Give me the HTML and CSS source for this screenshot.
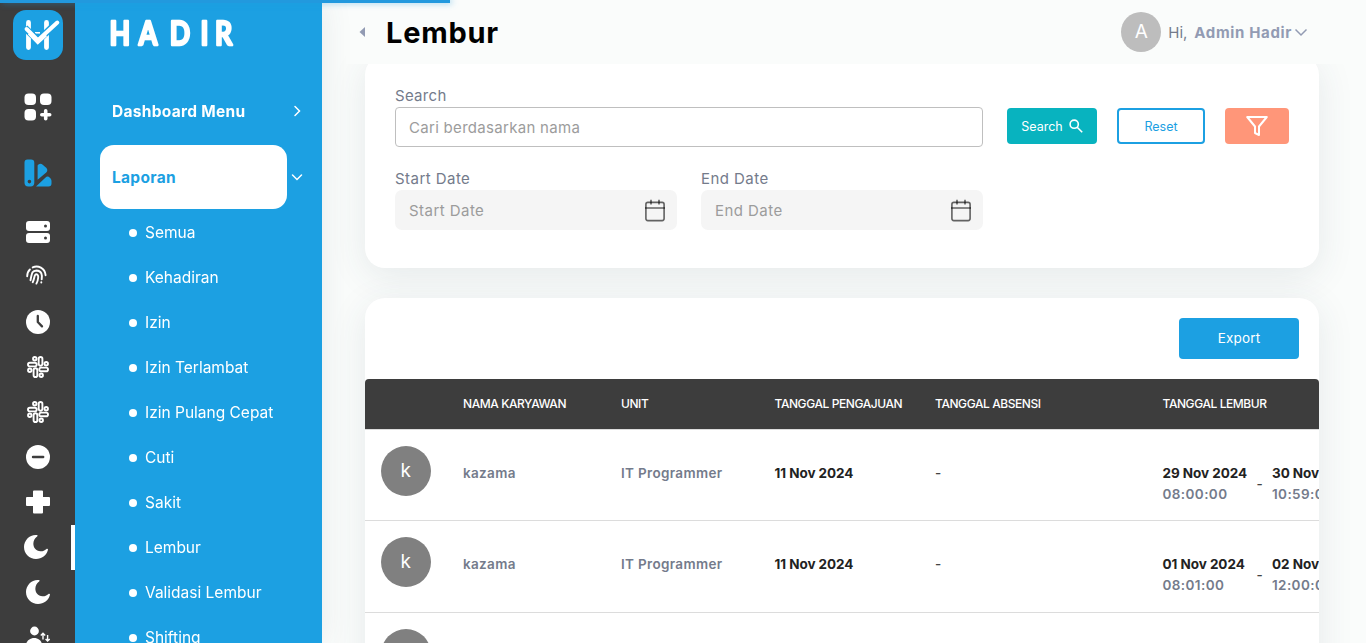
FILE: index.html
```html
<!DOCTYPE html>
<html lang="id">
<head>
<meta charset="utf-8">
<title>Lembur - Hadir</title>
<link rel="stylesheet" href="styles.css">
</head>
<body>
<div class="progress"></div>
<div class="app">
  <nav class="rail">
    <svg class="brand" width="50" height="50" viewBox="13 10 50 50">
      <rect x="13" y="10" width="50" height="50" rx="13" fill="#1ca0e2"/>
      <g stroke="#fff" stroke-width="4.800" stroke-linecap="round">
        <path d="M28.500 22.500V47.500M46.500 22.500V47.500"/>
        <path d="M35 32.800H40" stroke-width="1.600" stroke-linecap="butt"/>
      </g>
      <path d="M25 28L38 40.500L57 22.500" fill="none" stroke="#1ca0e2" stroke-width="6.800"/>
      <path d="M29.500 33L37.800 41.500L45.500 34.500" fill="none" stroke="#fff" stroke-width="4.500"/>
      <path d="M26.600 29L38 40.300L57.300 22.500" fill="none" stroke="#fff" stroke-width="4" stroke-linecap="round" stroke-linejoin="round"/>
    </svg>
    <a class="rail-main rail-first">
      <svg width="28" height="28" viewBox="0 0 28 28" fill="#fff">
        <rect x=".5" y=".5" width="11.5" height="11.5" rx="4"/><rect x="16" y=".5" width="11.5" height="11.5" rx="4"/><rect x=".5" y="16" width="11.5" height="11.5" rx="4"/>
        <path d="M21.7 17.8V25.7M17.8 21.7H25.7" stroke="#fff" stroke-width="3.6" stroke-linecap="round"/>
      </svg>
    </a>
    <a class="rail-main">
      <svg width="28" height="28" viewBox="0 0 28 28" fill="#1ca0e2">
        <path fill-rule="evenodd" d="M3.5 .5h3.5a3.3 3.3 0 0 1 3.3 3.3v20a3.7 3.7 0 0 1-3.7 3.7H4.2a3.7 3.7 0 0 1-3.7-3.7V3.5a3 3 0 0 1 3-3zM5.4 20.8a1.8 1.8 0 1 0 0 3.6a1.8 1.8 0 0 0 0-3.6z"/>
        <path d="M13.6 20.8V7.1C13.6 5.2 16.6 4 18.4 5.5L22.2 8.8C23.8 10.3 23.6 12.3 22.2 13.6z"/>
        <path d="M12 27.5L21.3 18.7C22.6 17.4 24.4 17.1 25.6 18.5C26.8 19.8 27.5 20.4 27.5 22V24.5C27.5 26.5 26.5 27.5 24.5 27.5z"/>
      </svg>
    </a>
    <div class="rail-list">
      <a><svg width="24" height="24" viewBox="0 0 24 24"><g fill="#fff"><rect y="1" width="24" height="10" rx="3"/><rect y="13" width="24" height="10" rx="3"/></g><g fill="#3d3d3d"><circle cx="19.5" cy="6" r="1.5"/><circle cx="19.5" cy="18" r="1.5"/></g></svg></a>
      <a><svg width="24" height="24" viewBox="0 0 24 24" fill="none" stroke="#fff" stroke-width="1.9" stroke-linecap="round"><path d="M1.2 12.2C1.2 9.8 2.2 7.1 3.9 5.5M6.7 3.4C12 .8 18.9 4.1 19.6 11.2"/><path d="M4.5 16.2C6 8.8 6.1 6.7 10.5 6.5C15.9 6.7 16.3 11.2 15.7 15.4M15.3 18.3V18.5"/><path d="M6.7 18.2C8.8 14.4 8 10.3 10.3 10.3C13.5 10.3 12.1 16.5 10.4 19.6"/></svg></a>
      <a><svg width="24" height="24" viewBox="0 0 24 24"><circle cx="12" cy="12" r="12" fill="#fff"/><path d="M11.8 6V12L16 16.4" fill="none" stroke="#3d3d3d" stroke-width="2.3" stroke-linecap="round" stroke-linejoin="round"/></svg></a>
      <a><svg width="24" height="24" viewBox="0 0 24 24" fill="none" stroke="#fff" stroke-width="1.9"><g id="knot"><rect x="12.7" y="2" width="3.7" height="8.7" rx="1.85"/><circle cx="8.8" cy="3.8" r="1.75"/><rect x="2" y="7.7" width="8.7" height="3.7" rx="1.85"/><circle cx="3.8" cy="15.2" r="1.75"/><rect x="7.6" y="13.3" width="3.7" height="8.7" rx="1.85"/><circle cx="15.2" cy="20.2" r="1.75"/><rect x="13.3" y="12.6" width="8.7" height="3.7" rx="1.85"/><circle cx="20.2" cy="8.8" r="1.75"/></g></svg></a>
      <a><svg width="24" height="24" viewBox="0 0 24 24" fill="none" stroke="#fff" stroke-width="1.9"><use href="#knot"/></svg></a>
      <a><svg width="24" height="24" viewBox="0 0 24 24"><circle cx="12" cy="12" r="12" fill="#fff"/><path d="M7 12H17.2" stroke="#3d3d3d" stroke-width="2.4" stroke-linecap="round"/></svg></a>
      <a><svg width="24" height="24" viewBox="0 0 24 24" fill="#fff"><path d="M8 .5H16a1 1 0 0 1 1 1V7h6a1 1 0 0 1 1 1v7a1 1 0 0 1-1 1H17v6.500a1 1 0 0 1-1 1H8a1 1 0 0 1-1-1V16H1a1 1 0 0 1-1-1V8a1 1 0 0 1 1-1H7V1.500a1 1 0 0 1 1-1z"/></svg></a>
      <a class="active"><svg width="24" height="24" viewBox="0 0 24 24" fill="#fff"><path id="moon" d="M12.600 .1C13.800 .2 14 1 13.100 1.500C7 6 8.500 15.500 16.500 16.200C18.500 16.400 20.500 15.600 22.200 14.200C23.200 13.400 24.300 13.800 23.900 15C22.500 20.500 17.800 24 12 24C5.400 24 0 18.600 0 12S5.800-.5 12.600 .1z"/></svg></a>
      <a><svg width="24" height="24" viewBox="0 0 24 24" fill="#fff"><use href="#moon"/></svg></a>
      <a><svg width="24" height="24" viewBox="0 0 24 24" fill="#fff"><circle cx="8.500" cy="6" r="4.400"/><path d="M0 21V19.500C1.500 10.800 15 10.800 16 19.500V21z"/><g fill="none" stroke="#fff" stroke-width="1.400"><path d="M17 14.500V8.500M14.800 10.600L17 8.300L19.200 10.600M21.600 10V16M19.600 14L21.600 16.100L23.700 14"/></g></svg></a>
    </div>
  </nav>

  <aside class="side">
    <svg class="wordmark" width="130" height="34" viewBox="0 0 130 34"><text transform="scale(.84 1)" x="1.800 36.500 73.500 110 127.500" y="28.500">HADIR</text></svg>
    <a class="group"><span>Dashboard Menu</span><svg width="8" height="12" viewBox="0 0 8 12"><path d="M2 1.500L6.500 6L2 10.500"/></svg></a>
    <a class="group open"><span>Laporan</span><svg width="12" height="8" viewBox="0 0 12 8"><path d="M1.500 2L6 6.500L10.500 2"/></svg></a>
    <ul>
      <li>Semua</li><li>Kehadiran</li><li>Izin</li><li>Izin Terlambat</li><li>Izin Pulang Cepat</li><li>Cuti</li><li>Sakit</li><li>Lembur</li><li>Validasi Lembur</li><li>Shifting</li>
    </ul>
  </aside>

  <main>
    <header>
      <svg width="6" height="10" viewBox="0 0 6 10"><path d="M6 0V10L.5 5z" fill="#929bb3"/></svg>
      <h1>Lembur</h1>
      <div class="user">
        <span class="initial">A</span><span class="hi">Hi,</span><b>Admin Hadir</b>
        <svg width="14" height="9" viewBox="0 0 14 9"><path d="M1.500 1.500L7 7L12.500 1.500" fill="none" stroke="#929bb3" stroke-width="1.500"/></svg>
      </div>
    </header>

    <section class="card filter">
      <div class="fields">
        <label class="wide"><span>Search</span><span class="input outlined">Cari berdasarkan nama</span></label>
        <label><span>Start Date</span><span class="input">Start Date
          <svg width="24" height="24" viewBox="0 0 24 24" fill="none" stroke="#000" stroke-opacity=".6" stroke-width="1.600"><g id="cal"><rect x="2.900" y="3.400" width="18.200" height="18.200" rx="2"/><path d="M2 9H22M8 .8V5.500M16 .8V5.500"/></g></svg></span></label>
        <label><span>End Date</span><span class="input">End Date
          <svg width="24" height="24" viewBox="0 0 24 24" fill="none" stroke="#000" stroke-opacity=".6" stroke-width="1.600"><use href="#cal"/></svg></span></label>
      </div>
      <div class="actions">
        <button class="search">Search <svg width="14" height="14" viewBox="0 0 14 14" fill="none" stroke="#fff" stroke-width="1.600"><circle cx="5.200" cy="5.200" r="4.100"/><path d="M8.200 8.200L13.200 13.200"/></svg></button>
        <button class="reset">Reset</button>
        <button class="funnel"><svg width="24" height="22" viewBox="0 0 24 22" fill="none" stroke="#fff" stroke-width="2"><path d="M2.200 2H21.800L14 11.500V20L10 18V11.500z" stroke-linejoin="round"/></svg></button>
      </div>
    </section>

    <section class="card list">
      <div class="tools"><button class="export">Export</button></div>
      <div class="table">
        <div class="row head"><i></i><span>NAMA KARYAWAN</span><span>UNIT</span><span>TANGGAL PENGAJUAN</span><span>TANGGAL ABSENSI</span><span>TANGGAL LEMBUR</span></div>
        <div class="row"><i class="avatar">k</i><span>kazama</span><span>IT Programmer</span><span class="dark">11 Nov 2024</span><span class="dash">-</span>
          <div class="range"><p><b>29 Nov 2024</b>08:00:00</p><em>-</em><p><b>30 Nov 2024</b>10:59:00</p></div></div>
        <div class="row tall"><i class="avatar">k</i><span>kazama</span><span>IT Programmer</span><span class="dark">11 Nov 2024</span><span class="dash">-</span>
          <div class="range"><p><b>01 Nov 2024</b>08:01:00</p><em>-</em><p><b>02 Nov 2024</b>12:00:00</p></div></div>
        <div class="row"><i class="avatar">k</i></div>
      </div>
    </section>
  </main>
</div>
</body>
</html>
```
FILE: styles.css
```css
* { box-sizing: border-box; }
body { margin: 0; height: 643px; overflow: hidden; background: #fafcfb; font-family: Inter, sans-serif; font-size: 15px; color: #747b8b; }
.app { display: flex; height: 643px; overflow: hidden; }
.progress { position: fixed; z-index: 9; top: 0; left: 0; width: 450px; height: 3px; background: #2299de; box-shadow: 2px 0 6px rgba(34, 153, 222, .6); }
.rail { flex: 0 0 75px; background: #3d3d3d; padding-top: 10px; z-index: 3; }
.brand { display: block; margin-left: 13px; }
.rail-main { display: flex; justify-content: center; align-items: center; height: 66px; }
.rail-main.rail-first { margin-top: 14px; }
.rail-main + .rail-main { margin-bottom: 4px; }
.rail-list a { display: flex; align-items: center; justify-content: center; height: 45px; padding: 0 0 2px 1px; }
.rail-list .active { border-right: 4px solid #fff; }
.rail-list a:nth-child(2) svg { margin-top: -2px; }
.side { flex: 0 0 247px; background: #1ca0e2; color: #fff; z-index: 2; padding-top: 16px; box-shadow: 0 0 30px rgba(60, 80, 90, .1); }
.wordmark { display: block; margin: 0 0 28px 33px; overflow: visible; }
.wordmark text { font: 700 32px Lato, sans-serif; fill: #fff; stroke: #fff; stroke-width: 2.400px; stroke-linejoin: round; }
.group { display: flex; align-items: center; height: 66px; padding-left: 25px; }
.group span { flex: 0 0 187px; padding-left: 12px; font-weight: 700; font-size: 15.500px; letter-spacing: .3px; }
.group svg { margin-left: 6px; fill: none; stroke: #fff; stroke-width: 1.500; stroke-linecap: round; }
.group.open span { height: 64px; line-height: 65px; background: #fff; color: #1ca0e2; border-radius: 14px; }
.group.open svg { margin-left: 4px; }
.side ul { list-style: none; margin: 0; padding: 0 0 0 54px; }
.side li { display: flex; align-items: center; height: 45px; font-size: 15.500px; }
.side li::before { content: ""; width: 8px; height: 8px; border-radius: 50%; background: #fff; margin-right: 8px; }
main { flex: 1; min-width: 0; padding: 55px 47px 0 43px; }
header { position: fixed; z-index: 1; top: 0; left: 346px; right: 0; height: 64px; padding: 0 58px 0 13px; background: #fafcfb; display: flex; align-items: center; }
h1 { margin: 1px 0 0 21px; color: #000; font-size: 29px; font-weight: 700; line-height: 36px; letter-spacing: .75px; }
.user { margin-left: auto; display: flex; align-items: center; color: #747b8b; }
.initial { width: 40px; height: 40px; border-radius: 50%; background: #bdbdbd; color: #fff; font-size: 19px; line-height: 40px; text-align: center; margin-right: 7px; }
.user b { margin: 0 2px 0 7px; color: #929bb3; letter-spacing: .65px; }
.card { width: 954px; background: #fff; border-radius: 20px; box-shadow: 0 8px 36px rgba(50, 65, 85, .1); }
.filter { height: 213px; padding: 31px 30px 0; display: flex; justify-content: space-between; }
.fields { width: 588px; display: grid; grid-template-columns: 282px 282px; column-gap: 24px; align-content: start; row-gap: 22px; }
.fields label { display: grid; grid-template-rows: 21px 40px; line-height: 20px; letter-spacing: .45px; }
.fields .wide { grid-column: 1 / 3; letter-spacing: .3px; }
.input { display: flex; align-items: center; justify-content: space-between; padding: 1px 10px 0 14px; border-radius: 7px; background: #f5f5f5; color: #9c9c9c; }
.outlined { background: #fff; border: 1px solid #bfbfbf; padding-left: 13px; border-radius: 4px; }
.actions { display: flex; gap: 20px; padding-top: 22px; }
button { font: 12.500px Inter, sans-serif; border: 0; border-radius: 4px; height: 36px; padding: 0; display: flex; align-items: center; justify-content: center; }
.search { width: 90px; background: #08b3bf; color: #fff; gap: 6px; }
.reset { width: 88px; background: #fff; border: 2px solid #1ca0e2; color: #1ca0e2; }
.funnel { width: 64px; background: #ff9679; }
.list { margin-top: 30px; height: 420px; overflow: hidden; }
.tools { height: 81px; padding: 20px 20px 0; display: flex; justify-content: flex-end; }
.export { width: 120px; height: 41px; padding-bottom: 1px; background: #1ca0e2; color: #fff; font-size: 13.500px; letter-spacing: .15px; }
.table { border-radius: 4px 4px 0 0; overflow: hidden; }
.row { display: grid; grid-template-columns: 82px 158px 153.500px 160.500px 227.500px 260px; width: 1058px; height: 91px; padding: 33px 0 0 16px; border-bottom: 1px solid #dcdcdc; line-height: 21px; font-size: 13.500px; font-weight: 600; letter-spacing: .33px; color: #747b8b; }
.row.tall { height: 92px; }
.row.head { height: 51px; padding-top: 14px; background: #3d3d3d; color: #fff; font-size: 12px; font-weight: 500; letter-spacing: -.42px; }
.avatar { width: 50px; height: 50px; margin-top: -17px; border-radius: 50%; background: #808080; color: #fff; font: 19px/50px Inter, sans-serif; text-align: center; }
.dark, .range b { color: #222; font-weight: 700; letter-spacing: -.05px; }
.dash, .range em { color: #444; font-style: normal; font-weight: 500; }
.range { display: flex; align-items: center; height: 42px; }
.range p { margin: 0; flex: 0 0 85px; letter-spacing: .4px; }
.range b { display: block; white-space: nowrap; }
.range em { width: 24.500px; padding-left: 9px; }
```
